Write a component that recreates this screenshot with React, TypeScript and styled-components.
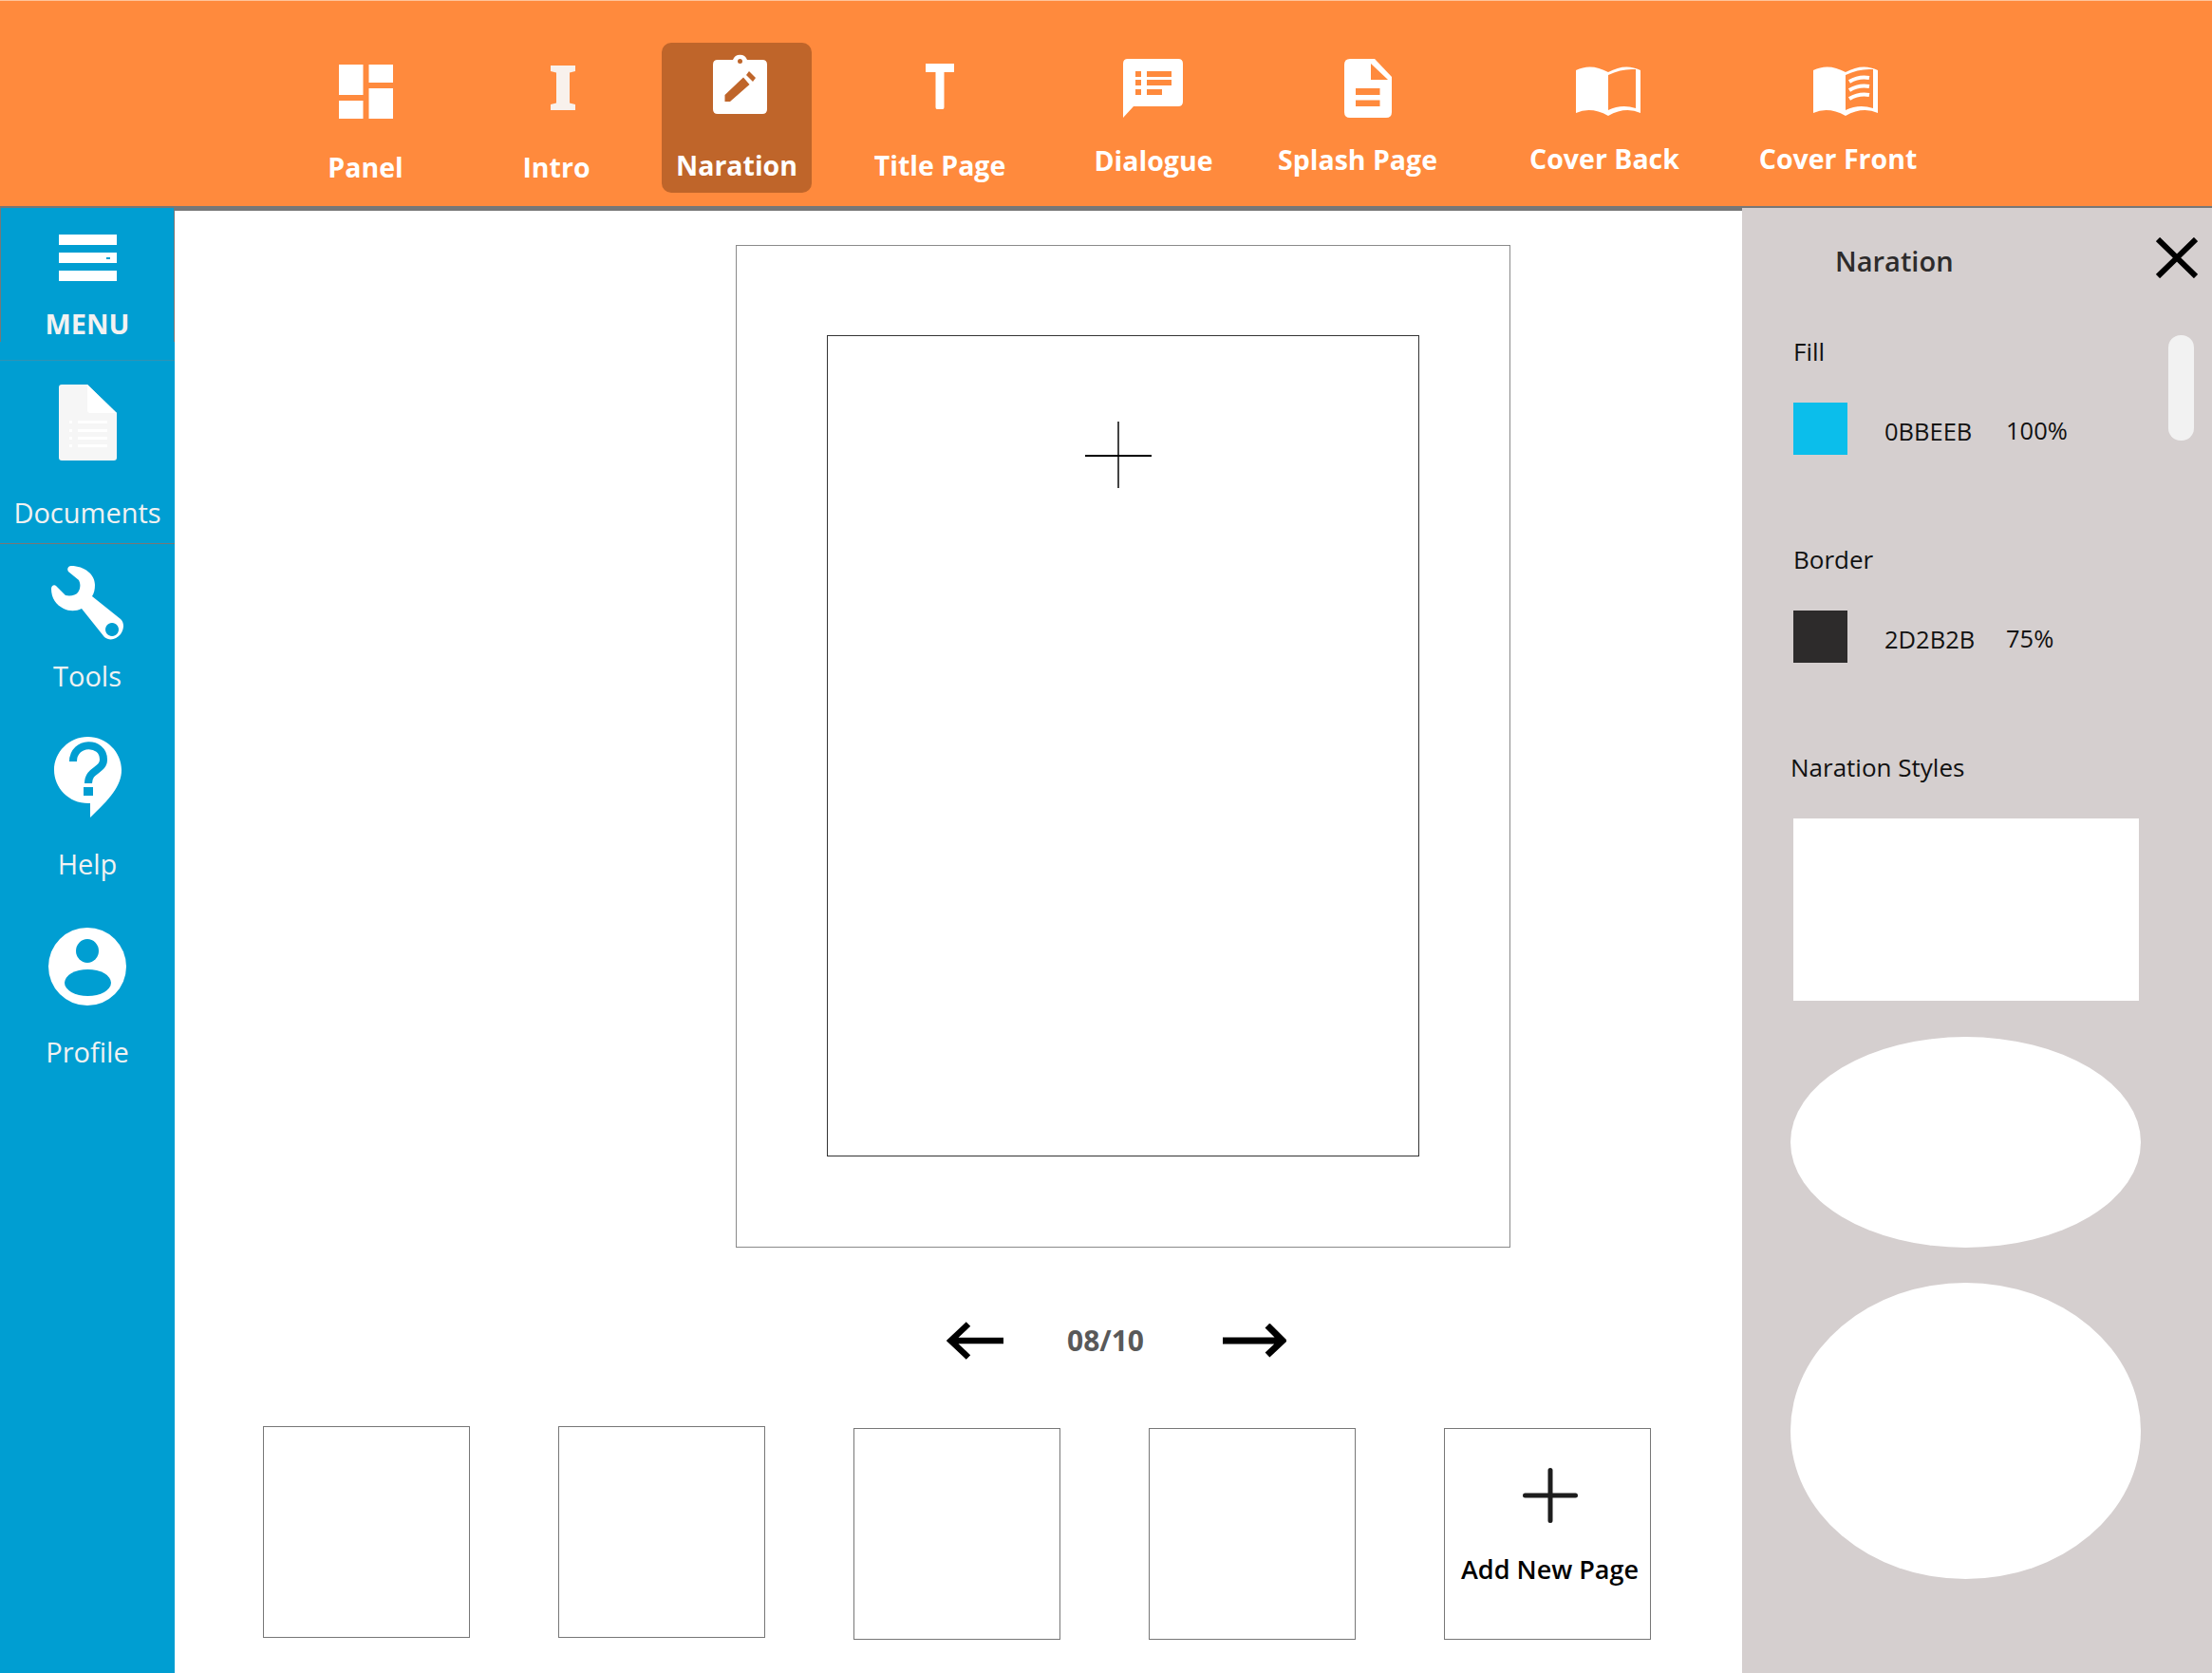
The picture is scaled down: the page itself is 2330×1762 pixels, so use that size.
import React from "react";
import styled, { createGlobalStyle } from "styled-components";

const Global = createGlobalStyle`
  html, body { margin: 0; padding: 0; background: #fff; }
  body { font-family: "Open Sans", "Noto Sans", sans-serif; }
`;

const ORANGE = "#ff8a3d";
const ACTIVE = "#bf652a";
const BLUE = "#009ed2";

const Page = styled.div`
  width: 2330px;
  height: 1762px;
  display: flex;
  flex-direction: column;
  overflow: hidden;
`;

const Header = styled.header`
  flex: none;
  height: 216px;
  box-sizing: content-box;
  border-top: 1px solid #ffc49c;
  border-bottom: 2px solid #777;
  background: ${ORANGE};
  display: flex;
  align-items: flex-start;
  padding-left: 306px;
`;

const Tab = styled.div<{ $gap: number; $top: number; $active?: boolean }>`
  flex: none;
  width: 158px;
  height: 158px;
  box-sizing: border-box;
  margin-left: ${(p) => p.$gap}px;
  margin-top: 44px;
  padding-top: ${(p) => p.$top}px;
  display: flex;
  flex-direction: column;
  align-items: center;
  border-radius: 10px;
  background: ${(p) => (p.$active ? ACTIVE : "transparent")};
`;

const TabIcon = styled.div<{ $shift: number }>`
  display: flex;
  margin-left: ${(p) => p.$shift * 2}px;
`;

const TabLabel = styled.div<{ $y: number }>`
  margin-top: ${(p) => p.$y}px;
  color: #fff;
  font-size: 28.5px;
  line-height: 34px;
  font-weight: 700;
  white-space: nowrap;
`;

const Body = styled.div`
  flex: 1;
  min-height: 0;
  display: flex;
`;

const Sidebar = styled.nav`
  flex: none;
  width: 184px;
  background: ${BLUE};
  display: flex;
  flex-direction: column;
`;

const SideItem = styled.div<{ $top: number; $gap: number; $bottom?: number; $rule?: string; $outlined?: boolean }>`
  position: relative;
  padding-top: ${(p) => p.$top}px;
  padding-bottom: ${(p) => p.$bottom ?? 0}px;
  display: flex;
  flex-direction: column;
  align-items: center;
  gap: ${(p) => p.$gap}px;
  border-bottom: ${(p) => (p.$rule ? `1px solid ${p.$rule}` : "none")};
  ${(p) =>
    p.$outlined
      ? `&::before {
          content: "";
          position: absolute;
          top: 0; left: 0; right: 0;
          height: 141px;
          border-style: solid;
          border-color: #777;
          border-width: 0 1px;
        }`
      : ""}
`;

const SideLabel = styled.div<{ $bold?: boolean }>`
  color: #f2f2f2;
  font-size: 29px;
  line-height: 34px;
  font-weight: ${(p) => (p.$bold ? 700 : 500)};
  white-space: nowrap;
`;

const Main = styled.main`
  flex: 1;
  min-width: 0;
  border-top: 3px solid #777;
  display: flex;
  flex-direction: column;
`;

const Sheet = styled.div`
  flex: none;
  width: 816px;
  height: 1056px;
  box-sizing: border-box;
  margin: 36px 0 0 591px;
  border: 1px solid #8a8a8a;
  padding: 94px 0 0 95px;
`;

const Bleed = styled.div`
  position: relative;
  width: 624px;
  height: 865px;
  box-sizing: border-box;
  border: 1px solid #333;
`;

const Cursor = styled.svg`
  position: absolute;
  left: 271px;
  top: 90px;
`;

const Pager = styled.div`
  flex: none;
  height: 42px;
  margin: 77px 0 0 813px;
  display: flex;
  align-items: center;
`;

const PageCount = styled.div`
  flex: none;
  width: 82px;
  margin: 0 82px 0 67px;
  color: #595959;
  font-size: 30px;
  line-height: 34px;
  font-weight: 700;
  white-space: nowrap;
`;

const Thumbs = styled.div`
  flex: none;
  margin: 69px 0 0 93px;
  display: flex;
  align-items: flex-start;
`;

const Thumb = styled.div<{ $low?: boolean; $gap: number }>`
  flex: none;
  width: 218px;
  height: 223px;
  box-sizing: border-box;
  margin-top: ${(p) => (p.$low ? 2 : 0)}px;
  margin-left: ${(p) => p.$gap}px;
  border: 1px solid #777;
  display: flex;
  flex-direction: column;
  align-items: center;
`;

const AddIcon = styled.svg`
  margin: 41px 0 0 6px;
`;

const AddLabel = styled.div`
  margin-top: 32px;
  margin-left: 5px;
  color: #000;
  font-size: 27px;
  line-height: 34px;
  font-weight: 600;
  white-space: nowrap;
`;

const Panel = styled.aside`
  position: relative;
  flex: none;
  width: 495px;
  box-sizing: border-box;
  background: #d5cfcf;
  padding: 31px 0 0 51px;
  overflow: hidden;
`;

const PanelHead = styled.div`
  display: flex;
  align-items: center;
  justify-content: space-between;
  height: 43px;
  padding-right: 15px;
`;

const PanelTitle = styled.div`
  margin: 7px 0 0 47px;
  color: #2d2b2b;
  font-size: 29px;
  line-height: 34px;
  font-weight: 600;
`;

const FieldLabel = styled.div<{ $top: number; $left?: number }>`
  margin: ${(p) => p.$top}px 0 0 ${(p) => p.$left ?? 3}px;
  color: #111;
  font-size: 26px;
  line-height: 30px;
  white-space: nowrap;
`;

const ColorRow = styled.div`
  margin: 39px 0 0 3px;
  display: flex;
  align-items: center;
`;

const Swatch = styled.div<{ $color: string }>`
  flex: none;
  width: 57px;
  height: 55px;
  background: ${(p) => p.$color};
`;

const Hex = styled.div`
  flex: none;
  width: 128px;
  margin: 5px 0 0 39px;
  color: #111;
  font-size: 25.5px;
  line-height: 30px;
`;

const Percent = styled.div`
  margin-top: 3px;
  color: #111;
  font-size: 25.5px;
  line-height: 30px;
`;

const StyleRect = styled.div`
  width: 364px;
  height: 192px;
  margin: 39px 0 0 3px;
  background: #fff;
`;

const StyleOval = styled.div<{ $h: number; $top: number }>`
  width: 369px;
  height: ${(p) => p.$h}px;
  margin-top: ${(p) => p.$top}px;
  border-radius: 50%;
  background: #fff;
`;

const ScrollThumb = styled.div`
  position: absolute;
  top: 134px;
  left: 449px;
  width: 27px;
  height: 111px;
  border-radius: 13px;
  background: #f2f2f2;
`;

const tabs = [
  {
    label: "Panel", gap: 0, top: 23, y: 34, shift: 0,
    icon: (
      <svg width="57" height="57" viewBox="0 0 57 57" fill="#fff">
        <rect x="0" y="0" width="25.5" height="32" />
        <rect x="0" y="38" width="25.5" height="19" />
        <rect x="31.5" y="0" width="25.5" height="19" />
        <rect x="31.5" y="25" width="25.5" height="32" />
      </svg>
    ),
  },
  {
    label: "Intro", gap: 43, top: 24, y: 43, shift: 7,
    icon: (
      <svg width="26" height="47" viewBox="0 0 26 47" fill="#f8f1ec">
        <path d="M0 0H26V6L20 7.5V39.5L26 41V47H0V41L6 39.5V7.5L0 6Z" />
      </svg>
    ),
  },
  {
    label: "Naration", gap: 32, active: true, top: 12, y: 37, shift: 3,
    icon: (
      <svg width="57" height="63" viewBox="0 0 57 63">
        <path fill="#fff" d="M5 6H21A8 8 0 0 1 36 6H52Q57 6 57 11V58Q57 63 52 63H5Q0 63 0 58V11Q0 6 5 6Z" />
        <circle cx="28.500" cy="7.500" r="2.500" fill={ACTIVE} />
        <path fill={ACTIVE} d="M12.500 43L32 24.500L38.500 32L18 50H12.500Z" />
        <path fill={ACTIVE} d="M35 22L38 18L45 25L42 29Z" />
      </svg>
    ),
  },
  {
    label: "Title Page", gap: 56, top: 22, y: 42, shift: 0,
    icon: (
      <svg width="30" height="48" viewBox="0 0 30 48" fill="#fff">
        <path d="M0 0H30V9H19.500V46Q19.500 48 18 48H12Q10.500 48 10.500 46V9H0Z" />
      </svg>
    ),
  },
  {
    label: "Dialogue", gap: 67, top: 17, y: 28, shift: -1,
    icon: (
      <svg width="63" height="62" viewBox="0 0 63 62">
        <path fill="#fff" d="M5 0H58Q63 0 63 5V45Q63 50 58 50H11L0 62V5Q0 0 5 0Z" />
        <g fill={ORANGE}>
          <rect x="13" y="13" width="6" height="6" />
          <rect x="13" y="22" width="6" height="6" />
          <rect x="13" y="32" width="6" height="6" />
          <rect x="25" y="13" width="26" height="6" />
          <rect x="25" y="22" width="26" height="6" />
          <rect x="25" y="32" width="16" height="6" />
        </g>
      </svg>
    ),
  },
  {
    label: "Splash Page", gap: 57, top: 17, y: 27, shift: 11,
    icon: (
      <svg width="50" height="62" viewBox="0 0 50 62">
        <path fill="#fff" d="M6 0H32L50 19V56Q50 62 44 62H6Q0 62 0 56V6Q0 0 6 0Z" />
        <path fill={ORANGE} d="M28 5L46 22H28Z" />
        <rect x="12" y="31" width="25.500" height="7" fill={ORANGE} />
        <rect x="12" y="43.500" width="25.500" height="6.500" fill={ORANGE} />
      </svg>
    ),
  },
  {
    label: "Cover Back", gap: 102, top: 24, y: 27, shift: 4,
    icon: (
      <svg width="68" height="54" viewBox="0 0 68 54">
        <path fill="#fff" d="M0 5Q16 -3 34 7Q52 -3 68 5V50Q52 43 34 53Q16 43 0 50Z" />
        <path fill={ORANGE} d="M34 10Q48 3 63 4V45Q48 40 34 47Z" />
      </svg>
    ),
  },
  {
    label: "Cover Front", gap: 88, top: 24, y: 27, shift: 8,
    icon: (
      <svg width="68" height="54" viewBox="0 0 68 54">
        <path fill="#fff" d="M0 5Q16 -3 34 7Q52 -3 68 5V50Q52 43 34 53Q16 43 0 50Z" />
        <path fill={ORANGE} d="M34 10Q48 3 63 4V45Q48 40 34 47Z" />
        <g fill="none" stroke="#fff" strokeWidth="4">
          <path d="M38 17Q48 11 59 13" />
          <path d="M38 26Q48 20 59 22" />
          <path d="M38 35Q48 29 59 31" />
        </g>
      </svg>
    ),
  },
];

export default function App() {
  return (
    <Page>
      <Global />
      <Header>
        {tabs.map((t) => (
          <Tab key={t.label} $gap={t.gap} $top={t.top} $active={t.active}>
            <TabIcon $shift={t.shift}>{t.icon}</TabIcon>
            <TabLabel $y={t.y}>{t.label}</TabLabel>
          </Tab>
        ))}
      </Header>
      <Body>
        <Sidebar>
          <SideItem $top={28} $gap={28} $bottom={21} $rule="#2f93b5" $outlined>
            <svg width="61" height="49" viewBox="0 0 61 49">
              <rect y="0" width="61" height="11" fill="#fff" />
              <rect y="19" width="61" height="11" fill="#fff" />
              <rect x="50" y="24" width="4" height="2" fill={BLUE} />
              <rect y="38" width="61" height="11" fill="#fff" />
            </svg>
            <SideLabel $bold>MENU</SideLabel>
          </SideItem>
          <SideItem $top={25} $gap={38} $bottom={15} $rule="#777">
            <svg width="61" height="80" viewBox="0 0 61 80">
              <path fill="#f6f6f6" d="M3 0H30L61 30V77Q61 80 58 80H3Q0 80 0 77V3Q0 0 3 0Z" />
              <path fill="#fff" d="M30 0L61 30H33Q30 30 30 27Z" />
              <g fill="#fff">
                <rect x="11" y="38" width="3" height="3" />
                <rect x="20" y="38" width="31" height="3" />
                <rect x="11" y="47" width="3" height="3" />
                <rect x="20" y="47" width="31" height="3" />
                <rect x="11" y="55" width="3" height="3" />
                <rect x="20" y="55" width="31" height="3" />
                <rect x="11" y="63" width="3" height="3" />
                <rect x="20" y="63" width="31" height="3" />
              </g>
            </svg>
            <SideLabel>Documents</SideLabel>
          </SideItem>
          <SideItem $top={23} $gap={21}>
            <svg width="78" height="78" viewBox="0 0 78 78">
              <path
                fill="#fff"
                fillRule="evenodd"
                d="M22 0C36 0 47 9 47 20C47 25 46 29 44 32L74 56C78 60 78 66 74 72C69 78 62 79 57 75L33 45C27 48 20 48 14 45C6 41 1 34 1 24C1 21 4 19 6 21L16 31C21 32 27 31 29 28C32 24 32 19 30 15L19 6C17 3 19 0 22 0ZM65 60A7 7 0 1 0 65.010 60Z"
              />
            </svg>
            <SideLabel>Tools</SideLabel>
          </SideItem>
          <SideItem $top={47} $gap={32}>
            <svg width="71" height="85" viewBox="0 0 71 85">
              <path
                fill="#fff"
                d="M35.500 0C55 0 71 16 71 35C71 52 58 66 38 85V70C16 71 0 54 0 35C0 16 16 0 35.500 0Z"
              />
              <path
                fill="none"
                stroke={BLUE}
                strokeWidth="8"
                d="M20 26C20 4 52 4 52 24C52 36 36 34 36 49"
              />
              <rect x="31" y="53" width="10" height="9" fill={BLUE} />
            </svg>
            <SideLabel>Help</SideLabel>
          </SideItem>
          <SideItem $top={50} $gap={32}>
            <svg width="82" height="82" viewBox="0 0 82 82">
              <ellipse cx="41" cy="41" rx="41" ry="41" fill="#fff" />
              <ellipse cx="41" cy="24.500" rx="12" ry="12.500" fill={BLUE} />
              <ellipse cx="41.500" cy="58" rx="24.500" ry="14" fill={BLUE} />
            </svg>
            <SideLabel>Profile</SideLabel>
          </SideItem>
        </Sidebar>
        <Main>
          <Sheet>
            <Bleed>
              <Cursor width="70" height="70" viewBox="0 0 70 70">
                <rect x="34" y="0" width="2" height="70" fill="#444" />
                <rect x="0" y="35" width="70" height="2" fill="#000" />
              </Cursor>
            </Bleed>
          </Sheet>
          <Pager>
            <svg width="60" height="40" viewBox="0 0 60 40">
              <path fill="none" stroke="#000" strokeWidth="6.500" d="M60 20H5M23 2.500L4.500 20L23 37.500" />
            </svg>
            <PageCount>08/10</PageCount>
            <svg width="67" height="36" viewBox="0 0 67 36">
              <path fill="none" stroke="#000" strokeWidth="7" d="M0 18H61M47 2L63 18L47 33" />
            </svg>
          </Pager>
          <Thumbs>
            <Thumb $gap={0} />
            <Thumb $gap={93} />
            <Thumb $gap={93} $low />
            <Thumb $gap={93} $low />
            <Thumb $gap={93} $low>
              <AddIcon width="58" height="58" viewBox="0 0 58 58">
                <path fill="none" stroke="#1d1d1d" strokeWidth="5" strokeLinecap="round" d="M29 2.500V55.500M2.500 29H55.500" />
              </AddIcon>
              <AddLabel>Add New Page</AddLabel>
            </Thumb>
          </Thumbs>
        </Main>
        <Panel>
          <ScrollThumb />
          <PanelHead>
            <PanelTitle>Naration</PanelTitle>
            <svg width="44" height="43" viewBox="0 0 44 43">
              <path fill="none" stroke="#000" strokeWidth="6" d="M2 2L42 41M42 2L2 41" />
            </svg>
          </PanelHead>
          <FieldLabel $top={62}>Fill</FieldLabel>
          <ColorRow>
            <Swatch $color="#0bbeeb" />
            <Hex>0BBEEB</Hex>
            <Percent>100%</Percent>
          </ColorRow>
          <FieldLabel $top={95}>Border</FieldLabel>
          <ColorRow>
            <Swatch $color="#2d2b2b" />
            <Hex>2D2B2B</Hex>
            <Percent>75%</Percent>
          </ColorRow>
          <FieldLabel $top={95} $left={0}>Naration Styles</FieldLabel>
          <StyleRect />
          <StyleOval $top={38} $h={222} />
          <StyleOval $top={37} $h={312} />
        </Panel>
      </Body>
    </Page>
  );
}
